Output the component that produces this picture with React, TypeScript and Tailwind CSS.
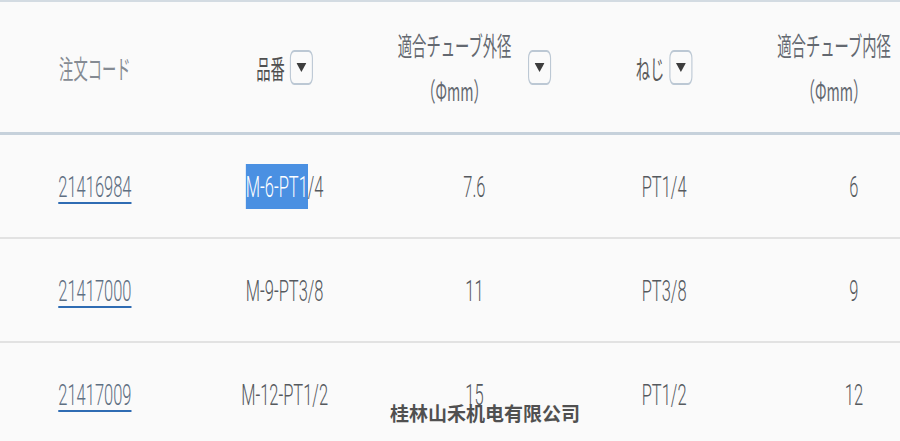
import React from 'react';

type Row = {
  code: string;
  part: string;
  outer: string;
  thread: string;
  inner: string;
  selected?: string;
};

const rows: Row[] = [
  { code: '21416984', part: 'M-6-PT1/4', outer: '7.6', thread: 'PT1/4', inner: '6', selected: 'M-6-PT1' },
  { code: '21417000', part: 'M-9-PT3/8', outer: '11', thread: 'PT3/8', inner: '9' },
  { code: '21417009', part: 'M-12-PT1/2', outer: '15', thread: 'PT1/2', inner: '12' },
];

const jp = { fontFamily: '"Noto Sans CJK JP", "Noto Sans", sans-serif' };
const num = { fontFamily: 'Roboto, "Liberation Sans", sans-serif' };

function FilterButton() {
  return (
    <span className="flex h-[35px] w-[42px] shrink-0 items-center justify-center rounded-[8px] border-2 border-[#bcc8d4]">
      <svg width="18" height="9" viewBox="0 0 18 9">
        <polygon points="0,0 18,0 9,9" fill="#3d3d3d" />
      </svg>
    </span>
  );
}

function HeaderCell({ lines, filter, color }: { lines: string[]; filter?: boolean; color: string }) {
  return (
    <div className="flex items-center justify-center gap-[30px]">
      <div className="flex flex-col items-center text-[26px] leading-[45px]" style={{ ...jp, color }}>
        {lines.map((l) => (
          <span key={l} className="whitespace-nowrap">{l}</span>
        ))}
      </div>
      {filter && <FilterButton />}
    </div>
  );
}

function Cell({ children }: { children: React.ReactNode }) {
  return (
    <div className="flex items-center justify-center text-[30px] font-light text-[#55595e]" style={num}>
      {children}
    </div>
  );
}

export default function App() {
  return (
    <div className="relative h-[441px] w-[900px] overflow-hidden bg-[#fafafa]">
      <div className="w-[1725px] origin-top-left scale-x-[0.55]">
        <div className="grid h-[135px] grid-cols-[345px_345px_345px_345px_345px] border-t-2 border-b-[3px] border-t-[#d3dbe2] border-b-[#c6d1db]">
          <div className="flex items-center justify-center">
            <HeaderCell lines={['注文コード']} color="#858b93" />
          </div>
          <div className="flex items-center justify-center">
            <div className="flex items-center gap-[9px]">
              <span className="text-[26px] text-[#4f4f4f]" style={jp}>品番</span>
              <FilterButton />
            </div>
          </div>
          <HeaderCell lines={['適合チューブ外径', '（Φmm）']} filter color="#636870" />
          <div className="flex items-center justify-center">
            <div className="flex items-center gap-[9px]">
              <span className="text-[26px] text-[#5a5a5a]" style={jp}>ねじ</span>
              <FilterButton />
            </div>
          </div>
          <HeaderCell lines={['適合チューブ内径', '（Φmm）']} filter color="#636870" />
        </div>

        {rows.map((r) => (
          <div
            key={r.code}
            className="grid h-[104px] grid-cols-[345px_345px_345px_345px_345px] border-b-2 border-[#e2e2e2]"
          >
            <Cell>
              <a
                href="#"
                className="text-[#5e6f82] underline decoration-[#2f6cb3] decoration-2 underline-offset-[5px]"
              >
                {r.code}
              </a>
            </Cell>
            <Cell>
              {r.selected ? (
                <span>
                  <span className="bg-[#4a90e2] py-[5px] text-white">{r.selected}</span>
                  {r.part.slice(r.selected.length)}
                </span>
              ) : (
                r.part
              )}
            </Cell>
            <Cell>{r.outer}</Cell>
            <Cell>{r.thread}</Cell>
            <Cell>{r.inner}</Cell>
          </div>
        ))}
      </div>

      <div
        className="absolute left-[390px] top-[400px] whitespace-nowrap text-[19px] font-bold leading-[26px] text-[#505050]"
        style={{ fontFamily: '"Noto Sans CJK SC", sans-serif' }}
      >
        桂林山禾机电有限公司
      </div>
    </div>
  );
}
